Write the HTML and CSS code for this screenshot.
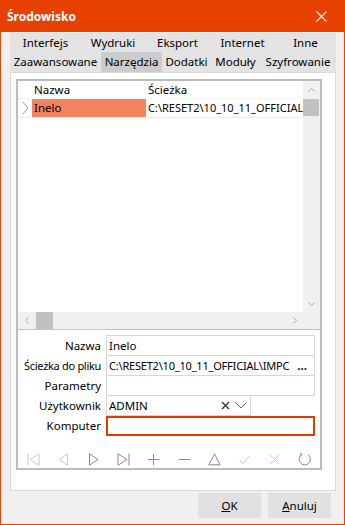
FILE: index.html
```html
<!DOCTYPE html>
<html>
<head>
  <meta charset="UTF-8">
  <title>Środowisko</title>
  <link rel="stylesheet" href="styles.css">
</head>
<body>
  <div class="window">
    <!-- Title bar -->
    <div class="titlebar">
      <span class="title">Środowisko</span>
      <svg class="close" width="11" height="11" viewBox="0 0 11 11">
        <path d="M0.5 0.5 L10.5 10.5 M10.5 0.5 L0.5 10.5" stroke="#ffffff" stroke-width="1.1" fill="none"/>
      </svg>
    </div>

    <!-- Tabs -->
    <div class="tabs">
      <div class="tab-row row-top">
        <span class="tab">Interfejs</span>
        <span class="tab">Wydruki</span>
        <span class="tab">Eksport</span>
        <span class="tab">Internet</span>
        <span class="tab">Inne</span>
      </div>
      <div class="tab-row row-bottom">
        <span class="tab">Zaawansowane</span>
        <span class="tab active">Narzędzia</span>
        <span class="tab">Dodatki</span>
        <span class="tab">Moduły</span>
        <span class="tab">Szyfrowanie</span>
      </div>
    </div>

    <div class="page">
      <div class="grid-box">
        <!-- Table with scrollbars -->
        <div class="grid-area">
          <div class="grid-table">
            <div class="grid-row grid-header">
              <span class="ind"></span>
              <span class="cell c1">Nazwa</span>
              <span class="cell c2">Ścieżka</span>
            </div>
            <div class="grid-row">
              <span class="ind">
                <svg width="7" height="14" viewBox="0 0 7 14"><polyline points="1,1 6,7 1,13" fill="none" stroke="#9a9a9a" stroke-width="1"/></svg>
              </span>
              <span class="cell c1 selected">Inelo</span>
              <span class="cell c2 cell-path">C:\RESET2\10_10_11_OFFICIAL\IMPORT</span>
            </div>
          </div>
          <div class="vscroll">
            <span class="sb-btn">
              <svg width="7" height="4" viewBox="0 0 7 4"><polyline points="0.5,3.5 3.5,0.5 6.5,3.5" fill="none" stroke="#a6a6a6"/></svg>
            </span>
            <span class="sb-thumb"></span>
            <span class="sb-fill"></span>
            <span class="sb-btn">
              <svg width="7" height="4" viewBox="0 0 7 4"><polyline points="0.5,0.5 3.5,3.5 6.5,0.5" fill="none" stroke="#a6a6a6"/></svg>
            </span>
          </div>
          <div class="hscroll">
            <span class="sb-btn">
              <svg width="4" height="7" viewBox="0 0 4 7"><polyline points="3.5,0.5 0.5,3.5 3.5,6.5" fill="none" stroke="#a6a6a6"/></svg>
            </span>
            <span class="sb-thumb"></span>
            <span class="sb-fill"></span>
            <span class="sb-btn">
              <svg width="4" height="7" viewBox="0 0 4 7"><polyline points="0.5,0.5 3.5,3.5 0.5,6.5" fill="none" stroke="#a6a6a6"/></svg>
            </span>
          </div>
          <div class="sb-corner"></div>
        </div>

        <!-- Detail form -->
        <div class="form">
          <div class="field-row">
            <label>Nazwa</label>
            <div class="field">Inelo</div>
          </div>
          <div class="field-row">
            <label class="label-long">Ścieżka do pliku</label>
            <div class="field field-path">
              <span class="path-value">C:\RESET2\10_10_11_OFFICIAL\IMPC</span>
              <span class="ellipsis">...</span>
            </div>
          </div>
          <div class="field-row">
            <label>Parametry</label>
            <div class="field"></div>
          </div>
          <div class="field-row">
            <label>Użytkownik</label>
            <div class="field field-combo">
              <span class="combo-value">ADMIN</span>
              <svg width="9" height="9" viewBox="0 0 9 9"><path d="M1 1 L8 8 M8 1 L1 8" stroke="#333333" stroke-width="1.3" fill="none"/></svg>
              <svg class="drop" width="12" height="7" viewBox="0 0 12 7"><polyline points="0.5,0.5 6,6 11.5,0.5" fill="none" stroke="#666666"/></svg>
            </div>
          </div>
          <div class="field-row">
            <label>Komputer</label>
            <div class="field field-focus"></div>
          </div>
        </div>

        <!-- Navigator -->
        <div class="nav">
          <span class="nav-btn off">
            <svg width="13" height="13" viewBox="0 0 13 13"><path d="M1 0.5 V12.5 M12 0.8 V12.2 L3 6.5 Z" fill="none" stroke="currentColor"/></svg>
          </span>
          <span class="nav-btn off">
            <svg width="13" height="13" viewBox="0 0 13 13"><path d="M10.5 0.8 V12.2 L2 6.5 Z" fill="none" stroke="currentColor"/></svg>
          </span>
          <span class="nav-btn">
            <svg width="13" height="13" viewBox="0 0 13 13"><path d="M2.5 0.8 V12.2 L11 6.5 Z" fill="none" stroke="currentColor"/></svg>
          </span>
          <span class="nav-btn">
            <svg width="13" height="13" viewBox="0 0 13 13"><path d="M1 0.8 V12.2 L10 6.5 Z M12 0.5 V12.5" fill="none" stroke="currentColor"/></svg>
          </span>
          <span class="nav-btn">
            <svg width="13" height="13" viewBox="0 0 13 13"><path d="M6.5 1 V12 M1 6.5 H12" fill="none" stroke="currentColor"/></svg>
          </span>
          <span class="nav-btn">
            <svg width="13" height="13" viewBox="0 0 13 13"><path d="M1 6.5 H12" fill="none" stroke="currentColor"/></svg>
          </span>
          <span class="nav-btn">
            <svg width="13" height="13" viewBox="0 0 13 13"><path d="M6.5 1 L12.2 11.8 H0.8 Z" fill="none" stroke="currentColor"/></svg>
          </span>
          <span class="nav-btn off">
            <svg width="13" height="13" viewBox="0 0 13 13"><polyline points="1.5,7 4.8,10.5 11.5,3" fill="none" stroke="currentColor"/></svg>
          </span>
          <span class="nav-btn off">
            <svg width="13" height="13" viewBox="0 0 13 13"><path d="M2 2 L11 11 M11 2 L2 11" fill="none" stroke="currentColor"/></svg>
          </span>
          <span class="nav-btn">
            <svg width="14" height="14" viewBox="0 0 14 14"><path d="M9.8 2.6 A5.6 5.6 0 1 1 4 2.4 M4 2.4 L2.6 0.6 M4 2.4 L1.8 3.2" fill="none" stroke="currentColor"/></svg>
          </span>
        </div>
      </div>
    </div>

    <div class="buttons">
      <button><u>O</u>K</button>
      <button><u>A</u>nuluj</button>
    </div>
  </div>
</body>
</html>
```

FILE: styles.css
```css
/* Global */
html, body {
  margin: 0;
  padding: 0;
  background: #f0f0f0;
}
.window {
  width: 345px;
  height: 525px;
  box-sizing: border-box;
  border: 1px solid #e64100;
  border-top: none;
  background: #f0f0f0;
  display: flex;
  flex-direction: column;
  font-family: 'Noto Sans', 'DejaVu Sans', sans-serif;
  font-size: 11.5px;
  color: #000000;
}

/* Title bar */
.titlebar {
  height: 32px;
  background: #e64100;
  display: flex;
  align-items: center;
  justify-content: space-between;
  padding: 0 17px 0 6px;
  flex-shrink: 0;
}
.title {
  color: #ffffff;
  font-weight: bold;
  font-size: 12px;
}

/* Tabs */
.tabs {
  margin: 1px 8px 0 9px;
  background: #e3e3e3;
  flex-shrink: 0;
}
.tab-row {
  display: grid;
  text-align: center;
  white-space: nowrap;
}
.row-top {
  grid-template-columns: 71px 64px 65px 65px 1fr;
  height: 18px;
  line-height: 18px;
  padding-top: 1px;
}
.row-bottom {
  grid-template-columns: 91px 61px 49px 49px 1fr;
  height: 20px;
  line-height: 20px;
}
.tab.active {
  background: #cccccc;
}

/* Tab page */
.page {
  margin: 0 8px 0 9px;
  background: #ffffff;
  border: 1px solid #d9d9d9;
  padding: 6px 13px 20px 5px;
  flex-shrink: 0;
}
.grid-box {
  border: 2px solid #bcbcbc;
}
.grid-area {
  display: grid;
  grid-template-columns: 1fr 17px;
  grid-template-rows: 231px 17px;
  border-bottom: 1px solid #c4c4c4;
}
.grid-table {
  overflow: hidden;
  background: #ffffff;
}
.grid-row {
  display: flex;
  height: 19px;
  line-height: 18px;
  border-bottom: 1px solid #ececec;
  box-sizing: border-box;
  white-space: nowrap;
}
.grid-header {
  height: 18px;
  border-bottom-color: #f6f6f6;
}
.ind {
  width: 14px;
  flex-shrink: 0;
  display: flex;
  align-items: center;
  justify-content: center;
}
.cell {
  padding: 0 2px;
  overflow: hidden;
}
.c1 {
  width: 114px;
  flex-shrink: 0;
  box-sizing: border-box;
}
.c2 {
  flex: 1;
}
.cell-path {
  font-size: 11px;
}
.selected {
  background: #f4845f;
}

/* Scrollbars */
.vscroll,
.hscroll,
.sb-corner {
  background: #f0f0f0;
  display: flex;
}
.vscroll {
  flex-direction: column;
}
.sb-btn {
  width: 17px;
  height: 17px;
  flex-shrink: 0;
  display: flex;
  align-items: center;
  justify-content: center;
}
.sb-fill {
  flex: 1;
}
.vscroll .sb-thumb {
  height: 17px;
  margin: 1px 1px 0 0;
  background: #c1c1c1;
}
.hscroll .sb-thumb {
  width: 17px;
  margin: 0 0 0 1px;
  background: #c1c1c1;
}

/* Form */
.form {
  background: #ffffff;
  padding: 5px 5px 0 0;
}
.field-row {
  display: flex;
  margin-top: -1px;
}
.field-row:first-child {
  margin-top: 0;
}
.field-row label {
  width: 88px;
  flex-shrink: 0;
  text-align: right;
  padding-right: 5px;
  box-sizing: border-box;
  line-height: 21px;
  white-space: nowrap;
}
.field-row .label-long {
  font-size: 11px;
  letter-spacing: -0.3px;
}
.field {
  flex: 1;
  height: 21px;
  box-sizing: border-box;
  border: 1px solid #d6d6d6;
  padding: 0 2px;
  line-height: 19px;
  white-space: nowrap;
  overflow: hidden;
}
.field-path {
  display: flex;
}
.path-value {
  flex: 1;
  overflow: hidden;
  font-size: 11px;
  letter-spacing: -0.2px;
}
.ellipsis {
  color: #0b1a66;
  padding: 0 5px 0 4px;
  font-weight: bold;
}
.field-combo {
  flex: 0 0 145px;
  display: flex;
  align-items: center;
  gap: 5px;
  padding-right: 3px;
}
.combo-value {
  flex: 1;
}
.field-focus {
  border: 2px solid #e03c00;
  height: 20px;
  margin-top: 1px;
}

/* Navigator */
.nav {
  height: 32px;
  display: flex;
  align-items: flex-end;
  padding-bottom: 2px;
  box-sizing: border-box;
  background: #ffffff;
}
.nav-btn {
  flex: 1;
  display: flex;
  justify-content: center;
  color: #8a8a8a;
}
.nav-btn.off {
  color: #c8c8c8;
}

/* Buttons */
.buttons {
  display: flex;
  justify-content: flex-end;
  gap: 7px;
  padding: 2px 13px 0 0;
}
.buttons button {
  width: 63px;
  height: 25px;
  border: none;
  background: #e1e1e1;
  font-family: inherit;
  font-size: 11.5px;
  color: #000000;
  padding: 0;
}
```
